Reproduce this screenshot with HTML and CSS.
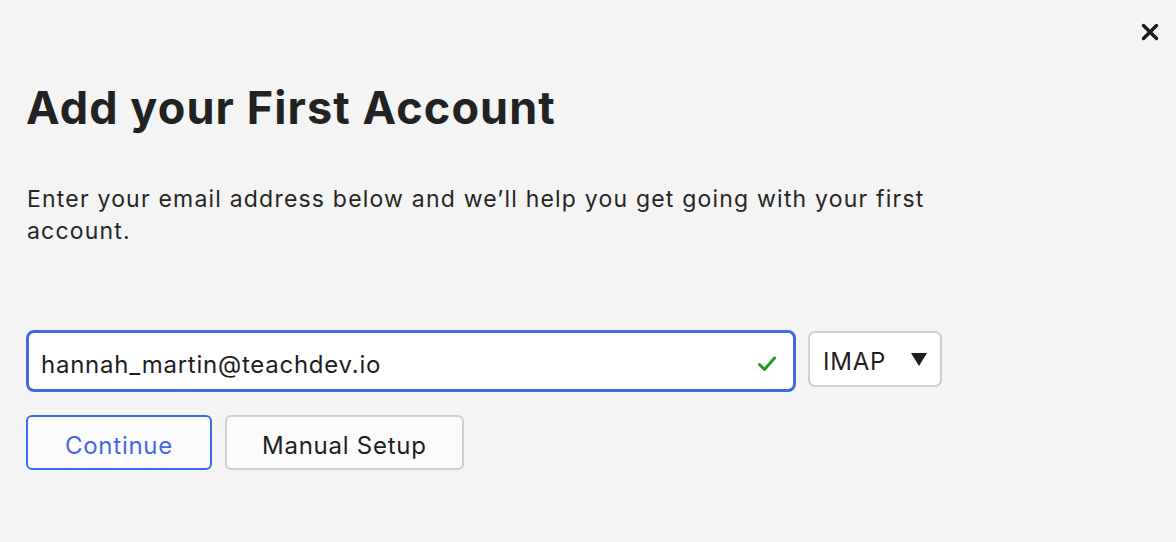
FILE: index.html
```html
<!DOCTYPE html>
<html>
<head>
<meta charset="utf-8">
<link rel="stylesheet" href="styles.css">
</head>
<body>
<div class="page">
  <button class="close" aria-label="Close">
    <svg width="18" height="18" viewBox="0 0 18 18"><path d="M2.5 2.5 L15.5 15.5 M15.5 2.5 L2.5 15.5" stroke="#1a1a1a" stroke-width="3.4" stroke-linecap="round"/></svg>
  </button>
  <main class="content">
    <h1 class="title">Add your First Account</h1>
    <p class="lead">Enter your email address below and we’ll help you get going with your first account.</p>
    <div class="row">
      <div class="email">
        <span class="email-text">hannah_martin@teachdev.io</span>
        <svg class="check" width="20" height="18" viewBox="0 0 20 18"><path d="M2.5 9.5 L7.5 14.5 L17.5 3" fill="none" stroke="#1e9e1e" stroke-width="3" stroke-linecap="round" stroke-linejoin="round"/></svg>
      </div>
      <div class="select">
        <span class="select-label">IMAP</span>
        <span class="tri"></span>
      </div>
    </div>
    <div class="actions">
      <button class="btn primary">Continue</button>
      <button class="btn">Manual Setup</button>
    </div>
  </main>
</div>
</body>
</html>
```
FILE: styles.css
```css
* { box-sizing: border-box; }
html, body { margin: 0; padding: 0; }
body {
  background: #f4f4f4;
  font-family: Inter, "Noto Sans", sans-serif;
  color: #222;
  width: 1176px;
  height: 542px;
  overflow: hidden;
}
.page {
  position: relative;
  height: 100%;
}
.close {
  position: absolute;
  top: 23px;
  right: 17px;
  background: none;
  border: none;
  padding: 0;
  width: 18px;
  height: 18px;
  cursor: pointer;
}
.content {
  padding: 80px 0 0 26px;
  width: 980px;
}
.title {
  margin: 0;
  font-size: 45px;
  font-weight: 700;
  line-height: 56px;
  color: #222;
  letter-spacing: 1.1px;
}
.lead {
  margin: 47px 0 0 1px;
  font-size: 23px;
  line-height: 32px;
  color: #262626;
  letter-spacing: 1.2px;
  width: 940px;
}
.row {
  display: flex;
  align-items: flex-start;
  gap: 12px;
  margin-top: 83px;
}
.email {
  width: 770px;
  height: 62px;
  border: 3px solid #4169e6;
  border-radius: 8px;
  background: #fff;
  display: flex;
  align-items: center;
  justify-content: space-between;
  padding: 0 16px 0 12px;
  font-size: 24px;
  letter-spacing: 0.75px;
  color: #1e1e1e;
}
.email-text { padding-top: 6px; }
.check { margin-top: 6px; }
.select {
  margin-top: 1px;
  width: 134px;
  height: 56px;
  border: 2px solid #cfcfcf;
  border-radius: 7px;
  background: #fff;
  display: flex;
  align-items: center;
  justify-content: space-between;
  padding: 0 13px 0 13px;
  font-size: 24px;
  letter-spacing: 0.75px;
  color: #1e1e1e;
}
.select-label { padding-top: 5px; }
.tri {
  width: 0;
  height: 0;
  border-left: 8px solid transparent;
  border-right: 8px solid transparent;
  border-top: 13px solid #1e1e1e;
}
.actions {
  display: flex;
  gap: 13px;
  margin-top: 23px;
}
.btn {
  height: 55px;
  padding: 5px 35px 0;
  border: 2px solid #cfcfcf;
  border-radius: 6px;
  background: #fbfbfb;
  font-family: inherit;
  font-size: 24px;
  letter-spacing: 0.75px;
  color: #1e1e1e;
}
.btn.primary {
  width: 186px;
  border-color: #4169e6;
  color: #4169e6;
  background: #fcfcfe;
}
```
